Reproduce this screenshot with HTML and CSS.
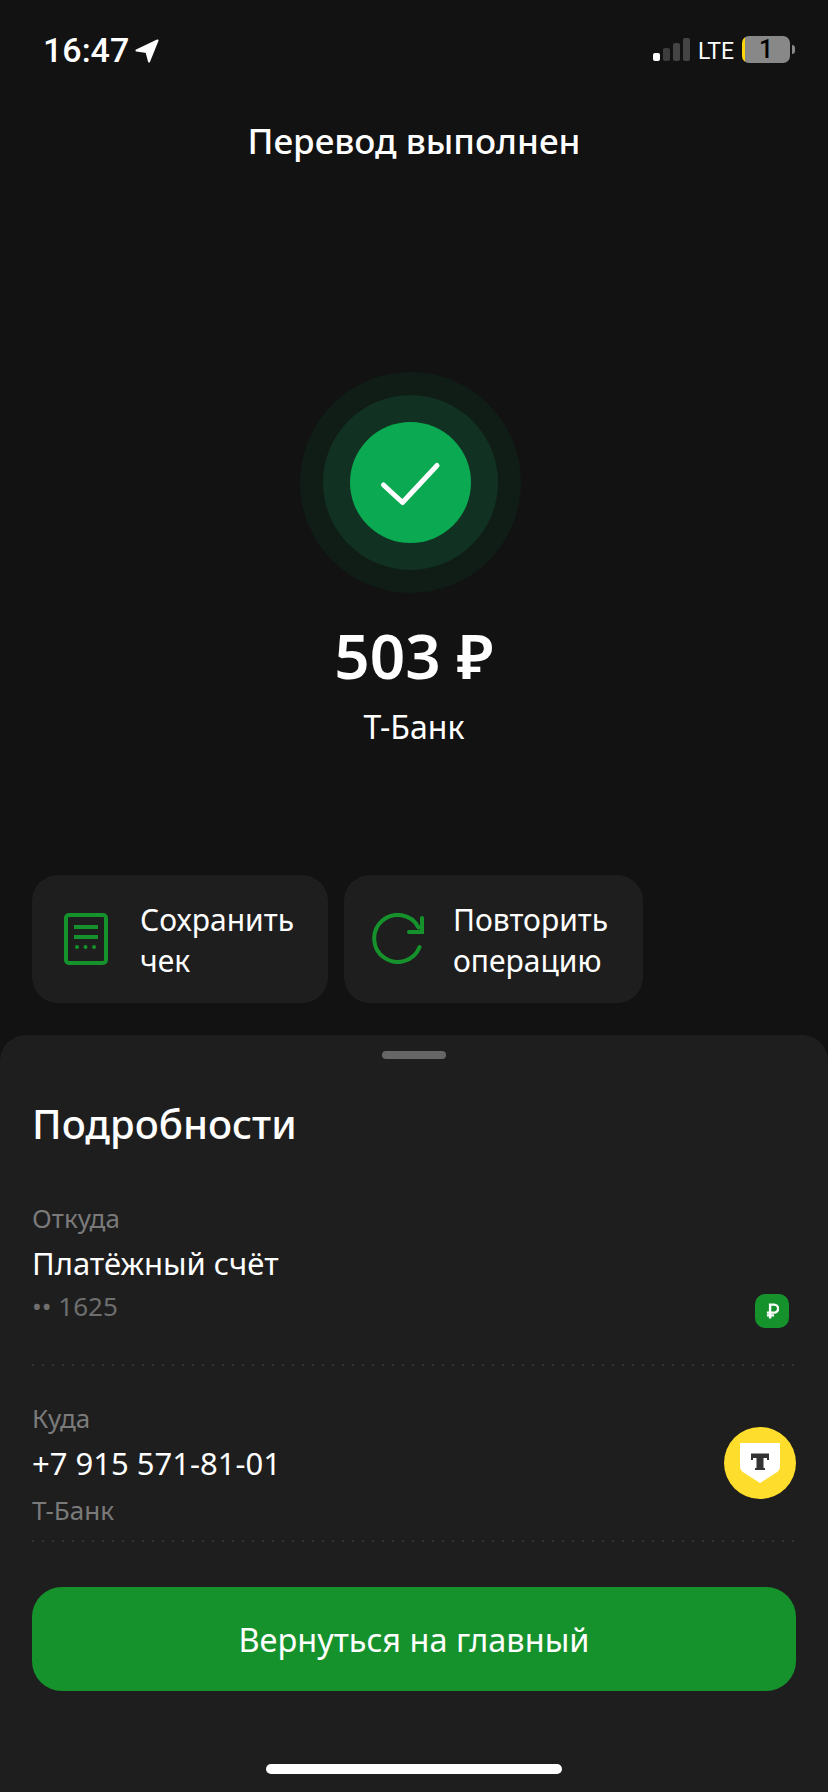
FILE: index.html
```html
<!DOCTYPE html>
<html lang="en">
<head>
    <meta charset="UTF-8">
    <meta name="viewport" content="width=device-width, initial-scale=1.0">
    <title>Перевод выполнен</title>
    <link rel="stylesheet" href="styles.css">
</head>
<body>
    <div class="top">
        <div class="statusbar">
            <div class="status-left">
                <span class="time">16:47</span>
                <svg class="location" width="24" height="24" viewBox="0 0 24 24">
                    <path d="M22.5 1.5 L1.5 11.5 L11.5 13 L14 22.5 Z" fill="#fff" stroke="#fff" stroke-width="2" stroke-linejoin="round"/>
                </svg>
            </div>
            <div class="status-right">
                <svg class="signal" width="37" height="23" viewBox="0 0 37 23">
                    <rect x="0" y="15" width="7" height="8" rx="2" fill="#fff"/>
                    <rect x="10" y="10" width="7" height="13" rx="2" fill="#3d3d3d"/>
                    <rect x="20" y="5" width="7" height="18" rx="2" fill="#444"/>
                    <rect x="30" y="0" width="7" height="23" rx="2" fill="#444"/>
                </svg>
                <span class="lte">LTE</span>
                <div class="battery"><span>1</span></div>
                <div class="battery-cap"></div>
            </div>
        </div>

        <h1 class="page-title">Перевод выполнен</h1>

        <div class="ring-outer">
            <div class="ring-mid">
                <div class="ring-inner">
                    <svg width="121" height="121" viewBox="0 0 121 121">
                        <path d="M33.5 63 L52.5 80.5 L87 43.5" fill="none" stroke="#fff" stroke-width="5" stroke-linecap="round" stroke-linejoin="round"/>
                    </svg>
                </div>
            </div>
        </div>

        <div class="amount">503 ₽</div>
        <div class="receiver">Т-Банк</div>

        <div class="actions">
            <div class="action action-receipt">
                <svg width="44" height="52" viewBox="0 0 44 52">
                    <rect x="2" y="2" width="40" height="48" rx="3" fill="none" stroke="#16922d" stroke-width="4"/>
                    <rect x="10" y="12" width="24" height="4" fill="#16922d"/>
                    <rect x="10" y="22" width="24" height="4" fill="#16922d"/>
                    <circle cx="13" cy="34" r="2" fill="#16922d"/>
                    <circle cx="21.5" cy="34" r="2" fill="#16922d"/>
                    <circle cx="30" cy="34" r="2" fill="#16922d"/>
                </svg>
                <div class="action-text">Сохранить<br>чек</div>
            </div>
            <div class="action action-repeat">
                <svg width="52" height="52" viewBox="0 0 52 52">
                    <path d="M47.6 34 A23.5 23.5 0 1 1 46.5 14.5" fill="none" stroke="#16922d" stroke-width="4" stroke-linecap="round"/>
                    <path d="M50 5 V19 H37" fill="none" stroke="#16922d" stroke-width="4" stroke-linecap="round"/>
                </svg>
                <div class="action-text">Повторить<br>операцию</div>
            </div>
        </div>
    </div>

    <div class="sheet">
        <div class="handle"></div>
        <h2 class="sheet-title">Подробности</h2>

        <div class="row row-from">
            <div>
                <div class="row-label">Откуда</div>
                <div class="row-value">Платёжный счёт</div>
                <div class="row-sub">•• 1625</div>
            </div>
            <div class="rub-badge">
                <svg width="13" height="16" viewBox="0 0 16 20">
                    <path d="M5 19.5 V2 H10 A5 5 0 0 1 10 12 H1 M1 15.5 H10" fill="none" stroke="#fff" stroke-width="3"/>
                </svg>
            </div>
        </div>

        <div class="row row-to">
            <div>
                <div class="row-label">Куда</div>
                <div class="row-value">+7 915 571-81-01</div>
                <div class="row-sub row-sub-bank">Т-Банк</div>
            </div>
            <div class="bank-logo">
                <svg width="40" height="40" viewBox="0 0 40 40">
                    <path d="M0 0 H40 V23 Q40 27 36.5 29.5 L20 40 L3.5 29.5 Q0 27 0 23 Z" fill="#fff"/>
                    <path d="M11 10.5 H29 V17 H27 V15 H23.5 V25 H25 V27 H15 V25 H16.5 V15 H13 V17 H11 Z" fill="#333"/>
                </svg>
            </div>
        </div>

        <button class="main-btn">Вернуться на главный</button>
        <div class="home-indicator"></div>
    </div>
</body>
</html>
```

FILE: styles.css
```css
body {
    margin: 0;
    padding: 0;
    height: 1792px;
    overflow: hidden;
    background-color: #121212;
    color: #fff;
    font-family: "Noto Sans", Arial, sans-serif;
}

.top {
    height: 1035px;
    display: flex;
    flex-direction: column;
    align-items: center;
}

/* Status bar */
.statusbar {
    box-sizing: border-box;
    width: 100%;
    height: 96px;
    padding: 36px 33px 0 43px;
    display: flex;
    justify-content: space-between;
    align-items: flex-start;
}

.status-left, .status-right {
    display: flex;
    align-items: center;
    height: 27px;
}

.time {
    font-family: Roboto, sans-serif;
    font-size: 34px;
    font-weight: 500;
    line-height: 27px;
    padding-top: 2px;
}

.location {
    margin-left: 6px;
    margin-top: 2px;
}

.lte {
    font-family: Roboto, sans-serif;
    font-size: 23px;
    line-height: 27px;
    margin-left: 8px;
    padding-top: 3px;
}

.battery {
    box-sizing: border-box;
    width: 48px;
    height: 27px;
    margin-left: 8px;
    border-radius: 7px;
    background: linear-gradient(90deg, #ffd60a 3px, #888 3px);
    color: #000;
    font-family: Roboto, sans-serif;
    font-size: 25px;
    font-weight: 500;
    line-height: 27px;
    text-align: center;
}

.battery-cap {
    width: 3px;
    height: 9px;
    margin-left: 2px;
    background-color: #888;
    border-radius: 0 3px 3px 0;
}

.page-title {
    margin: 22px 0 0;
    font-size: 35px;
    font-weight: 500;
    line-height: 46px;
}

/* Success icon */
.ring-outer, .ring-mid, .ring-inner {
    display: flex;
    align-items: center;
    justify-content: center;
    border-radius: 50%;
}

.ring-outer {
    width: 221px;
    height: 221px;
    margin: 208px 8px 0 0;
    background-color: #101c16;
}

.ring-mid {
    width: 175px;
    height: 175px;
    background-color: #113222;
}

.ring-inner {
    width: 121px;
    height: 121px;
    background-color: #0aa952;
}

.amount {
    margin-top: 24px;
    font-size: 62px;
    font-weight: 600;
    line-height: 76px;
}

.receiver {
    margin-top: 14px;
    font-size: 32px;
    line-height: 40px;
}

/* Action cards */
.actions {
    align-self: flex-start;
    display: flex;
    gap: 16px;
    margin: 128px 0 0 32px;
}

.action {
    box-sizing: border-box;
    height: 128px;
    display: flex;
    align-items: center;
    border-radius: 26px;
    background-color: #1e1e1e;
}

.action-receipt {
    width: 296px;
    padding-left: 32px;
    gap: 32px;
}

.action-repeat {
    width: 299px;
    padding-left: 28px;
    gap: 29px;
}

.action-text {
    font-size: 30px;
    line-height: 41px;
    padding-top: 1px;
}

/* Bottom sheet */
.sheet {
    box-sizing: border-box;
    height: 757px;
    padding: 16px 32px 0;
    display: flex;
    flex-direction: column;
    background-color: #1e1e1e;
    border-radius: 26px 26px 0 0;
}

.handle {
    align-self: center;
    width: 64px;
    height: 8px;
    border-radius: 4px;
    background-color: #666;
}

.sheet-title {
    margin: 39px 0 0;
    font-size: 40px;
    font-weight: 500;
    line-height: 52px;
}

.row {
    display: flex;
    justify-content: space-between;
    align-items: flex-start;
    background-image: linear-gradient(90deg, #333 2px, transparent 2px);
    background-size: 10px 2px;
    background-repeat: repeat-x;
    background-position: left bottom;
}

.row-from {
    margin-top: 50px;
    height: 166px;
}

.row-to {
    margin-top: 34px;
    height: 142px;
}

.row-label, .row-sub {
    font-size: 26px;
    line-height: 36px;
    color: #7a7a7a;
}

.row-value {
    margin-top: 5px;
    font-size: 31px;
    line-height: 44px;
}

.row-sub {
    margin-top: 3px;
    color: #6e6e6e;
}

.row-sub-bank {
    margin-top: 7px;
    color: #7a7a7a;
}

.rub-badge {
    width: 34px;
    height: 34px;
    margin: 94px 7px 0 0;
    display: flex;
    align-items: center;
    justify-content: center;
    border-radius: 10px;
    background-color: #16922d;
}

.bank-logo {
    width: 72px;
    height: 72px;
    margin-top: 27px;
    display: flex;
    align-items: center;
    justify-content: center;
    border-radius: 50%;
    background-color: #ffdd2d;
}

.main-btn {
    height: 104px;
    margin-top: 45px;
    padding: 0;
    border: none;
    border-radius: 30px;
    background-color: #16922d;
    color: #fff;
    font-family: inherit;
    font-size: 32.5px;
    cursor: pointer;
}

.home-indicator {
    align-self: center;
    width: 296px;
    height: 10px;
    margin-top: 73px;
    border-radius: 5px;
    background-color: #fff;
}
```
